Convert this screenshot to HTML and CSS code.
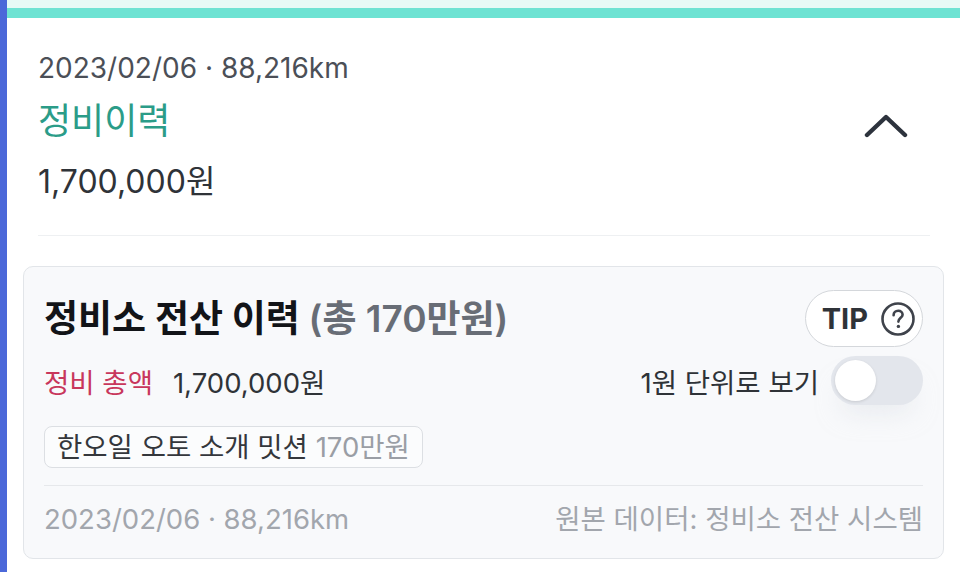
FILE: index.html
```html
<!DOCTYPE html>
<html lang="ko">
<head>
  <meta charset="UTF-8" />
  <meta name="viewport" content="width=device-width, initial-scale=1.0"/>
  <title>정비이력</title>
  <link rel="stylesheet" href="styles.css">
</head>
<body>
  <div class="side-bar"></div>

  <main class="page">
    <div class="top-stripe"></div>

    <section class="summary">
      <div class="summary-text">
        <div class="summary-date">2023/02/06 · 88,216km</div>
        <div class="summary-title">정비이력</div>
        <div class="summary-amount">1,700,000원</div>
      </div>
      <button class="collapse-btn" aria-label="접기">
        <svg width="44" height="28" viewBox="0 0 44 28">
          <path d="M3 22 L22 4 L41 22" fill="none" stroke="#2d333d" stroke-width="4.4" stroke-linecap="round" stroke-linejoin="round"/>
        </svg>
      </button>
    </section>

    <section class="shop-card">
      <div class="card-head">
        <h2 class="card-title">정비소 전산 이력 <span class="card-total">(총 170만원)</span></h2>
        <button class="tip-btn">
          TIP
          <svg width="36" height="36" viewBox="0 0 36 36">
            <circle cx="18" cy="18" r="15.5" fill="none" stroke="#3f434b" stroke-width="2.6"/>
            <path d="M13.6 14.2 C13.6 11.5 15.6 9.8 18.2 9.8 C20.8 9.8 22.6 11.5 22.6 13.8 C22.6 16.6 18.4 17.2 18.4 20.6" fill="none" stroke="#3f434b" stroke-width="2.6" stroke-linecap="round"/>
            <circle cx="18.4" cy="25.4" r="1.7" fill="#3f434b"/>
          </svg>
        </button>
      </div>

      <div class="card-row">
        <div class="total">
          <span class="total-label">정비 총액</span>
          <span class="total-value">1,700,000원</span>
        </div>
        <label class="unit-toggle">
          <span>1원 단위로 보기</span>
          <span class="switch"><span class="knob"></span></span>
        </label>
      </div>

      <div class="tag">한오일 오토 소개 밋션 <span class="tag-amount">170만원</span></div>

      <div class="card-foot">
        <span>2023/02/06 · 88,216km</span>
        <span>원본 데이터: 정비소 전산 시스템</span>
      </div>
    </section>
  </main>
</body>
</html>
```

FILE: styles.css
```css
body {
  margin: 0;
  display: flex;
  min-height: 572px;
  background: #ffffff;
  font-family: Inter, "Noto Sans CJK KR", sans-serif;
  color: #2f3338;
}

.side-bar {
  width: 7px;
  flex-shrink: 0;
  background: #4b68d9;
}

.page {
  flex: 1;
  min-width: 0;
}

.top-stripe {
  height: 8px;
  background: #e6faf6;
  border-bottom: 10px solid #6ee3d3;
}

.summary {
  margin: 0 30px 0 31px;
  padding: 33px 0 33px;
  display: flex;
  align-items: center;
  justify-content: space-between;
  border-bottom: 1.5px solid #eef0f2;
}

.summary-date {
  font-size: 28px;
  line-height: 34px;
  color: #4b4f57;
}

.summary-title {
  margin-top: 14px;
  font-size: 36px;
  line-height: 44px;
  color: #2b9c88;
}

.summary-amount {
  margin-top: 19px;
  font-size: 32px;
  line-height: 40px;
  color: #2f3338;
}

.collapse-btn {
  background: transparent;
  border: none;
  padding: 0;
  margin-right: 22px;
  display: flex;
}

.shop-card {
  margin: 30px 16px 14px 16px;
  padding: 23px 20px 22px 20px;
  background: #f8f9fb;
  border: 1.5px solid #e2e5e9;
  border-radius: 10px;
}

.card-head {
  display: flex;
  align-items: center;
  justify-content: space-between;
}

.card-title {
  margin: 0;
  font-size: 37px;
  line-height: 44px;
  font-weight: 700;
  color: #121418;
}

.card-total {
  color: #686d76;
  font-weight: 600;
}

.tip-btn {
  display: flex;
  align-items: center;
  gap: 12px;
  height: 57px;
  padding: 0 6px 0 16px;
  background: #ffffff;
  border: 1.5px solid #d4d7db;
  border-radius: 29px;
  font-family: inherit;
  font-size: 29px;
  font-weight: 700;
  color: #2f3338;
}

.card-row {
  margin-top: 9px;
  display: flex;
  align-items: center;
  justify-content: space-between;
}

.total {
  font-size: 27.5px;
  display: flex;
  gap: 20px;
}

.total-label {
  color: #c8375c;
}

.total-value {
  color: #2f3338;
}

.unit-toggle {
  display: flex;
  align-items: center;
  gap: 12px;
  font-size: 27.5px;
  color: #2f3338;
}

.switch {
  width: 92px;
  height: 49px;
  border-radius: 25px;
  background: #e3e6ec;
  display: flex;
  align-items: center;
  padding-left: 4px;
  box-sizing: border-box;
  box-shadow: 0 18px 24px -10px rgba(220, 224, 230, 0.5);
}

.knob {
  width: 41px;
  height: 41px;
  border-radius: 50%;
  background: #ffffff;
  box-shadow: 0 1px 3px rgba(0, 0, 0, 0.12);
}

.tag {
  display: inline-block;
  margin-top: 21px;
  padding: 0 12px;
  height: 42px;
  line-height: 40px;
  box-sizing: border-box;
  border: 1.5px solid #dcdfe3;
  border-radius: 8px;
  background: #fbfcfd;
  font-size: 27.5px;
  color: #34373c;
}

.tag-amount {
  color: #9a9ea5;
}

.card-foot {
  margin-top: 17px;
  padding-top: 16px;
  border-top: 1.5px solid #e6e8eb;
  display: flex;
  justify-content: space-between;
  font-size: 27.5px;
  line-height: 34px;
  color: #a2a6ad;
}
```
